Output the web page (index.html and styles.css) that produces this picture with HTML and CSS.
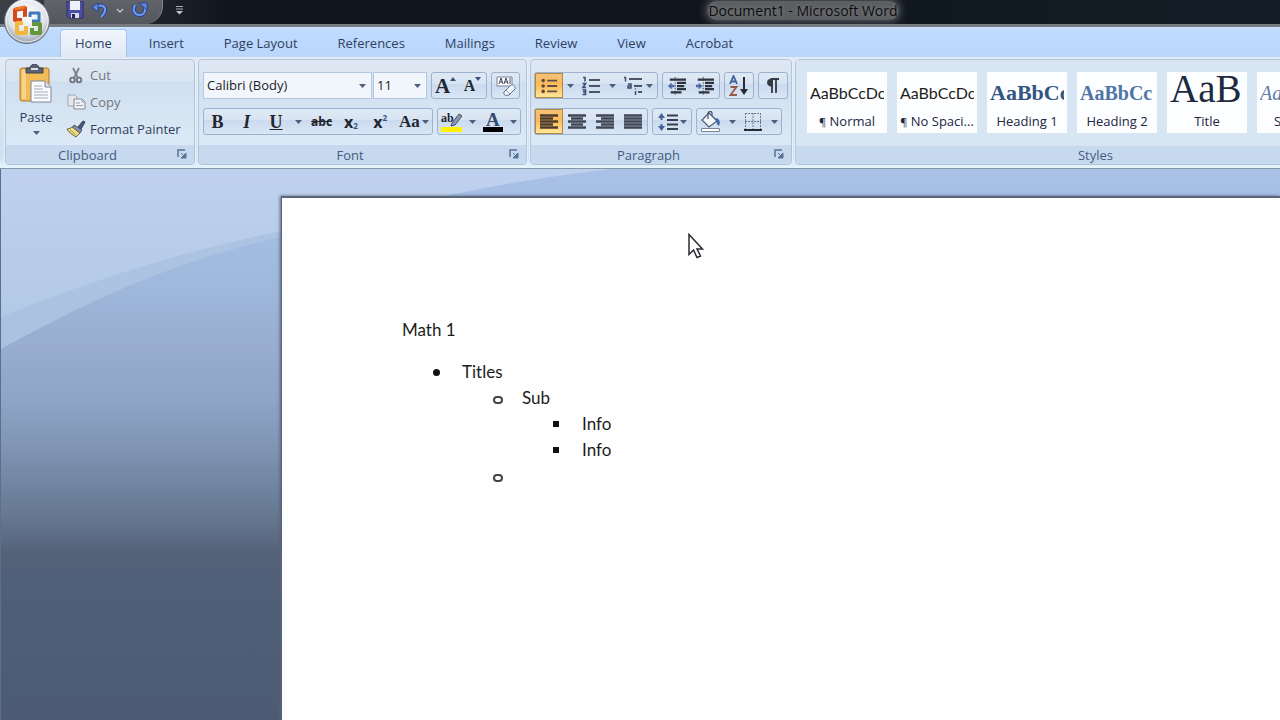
FILE: index.html
```html
<!DOCTYPE html>
<html lang="en">
<head>
<meta charset="utf-8">
<title>Document1 - Microsoft Word</title>
<link rel="stylesheet" href="styles.css">
</head>
<body>
<svg class="defs" width="0" height="0" aria-hidden="true">
  <symbol id="arrow" viewBox="0 0 7 4"><path d="M0 0h7L3.500 4z" fill="#4c5f7e"/></symbol>
  <symbol id="launch" viewBox="0 0 10 10"><path d="M1 8V1h7" fill="none" stroke="#5a7296" stroke-width="1.500"/><path d="M4 4l3 3M9 4v5H4z" stroke="#5a7296" fill="#5a7296"/></symbol>
</svg>

<header class="titlebar">
  <div class="qat">
    <button class="qat-btn" aria-label="Save">
      <svg width="18" height="18" viewBox="0 0 18 18"><path d="M1 0h16v17H3l-2-2z" fill="#4d4fa6" stroke="#2c2d6b"/><path d="M4 0h10v9H4z" fill="#eef1fb"/><path d="M5 12h8v5H5z" fill="#d5d9ea"/><path d="M6 13h3v4H6z" fill="#25264f"/></svg>
    </button>
    <button class="qat-btn" aria-label="Undo">
      <svg width="16" height="16" viewBox="0 0 16 16"><path d="M5 5c4-3 9-1 8 4-.4 2.500-2 4-4 6" fill="none" stroke="#27459c" stroke-width="4"/><path d="M5 5c4-3 9-1 8 4-.4 2.500-2 4-4 6" fill="none" stroke="#6f9be6" stroke-width="2"/><path d="M0 5l6-4v9z" fill="#5f8ce0" stroke="#27459c"/></svg>
    </button>
    <button class="qat-more" aria-label="Undo history">
      <svg width="8" height="5" viewBox="0 0 8 5"><path d="M1 1l3 3 3-3" fill="none" stroke="#b9bcc4" stroke-width="1.500"/></svg>
    </button>
    <button class="qat-btn" aria-label="Repeat">
      <svg width="16" height="16" viewBox="0 0 16 16"><path d="M3 3c-3 6 0 10 5 10 4 0 6-4 5-9" fill="none" stroke="#27459c" stroke-width="4"/><path d="M3 3c-3 6 0 10 5 10 4 0 6-4 5-9" fill="none" stroke="#6f9be6" stroke-width="2"/><path d="M7 1h8v7z" fill="#5f8ce0" stroke="#27459c"/></svg>
    </button>
  </div>
  <button class="qat-custom" aria-label="Customize Quick Access Toolbar">
    <svg width="9" height="9" viewBox="0 0 9 9"><path d="M1 .5h7M1 3h7" stroke="#aab0ba"/><path d="M1 5h7L4.500 8.500z" fill="#c3c8d0"/></svg>
  </button>
  <h1 class="title"><span>Document1 - Microsoft Word</span></h1>
  <button class="orb" aria-label="Office Button">
    <svg width="48" height="48" viewBox="0 0 48 48">
      <defs><radialGradient id="orbFill" cx=".5" cy=".35" r=".65"><stop offset="0" stop-color="#fff"/><stop offset=".65" stop-color="#dfe3ea"/><stop offset="1" stop-color="#949ca9"/></radialGradient></defs>
      <circle cx="24" cy="24" r="22.500" fill="url(#orbFill)" stroke="#626977"/>
      <circle cx="24" cy="24" r="21" fill="none" stroke="#fff" stroke-opacity=".7"/>
      <g fill="none" stroke-linejoin="round">
        <path d="M19 23h-7V13l10-2v9" stroke="#d24a1c" stroke-width="4"/>
        <path d="M12 12l10-2" stroke="#ee7a28" stroke-width="3"/>
        <path d="M27 20v-4h9v8h-7" stroke="#3f78bd" stroke-width="3"/>
        <path d="M20 26h-6v10h9v-7" stroke="#f0b83c" stroke-width="4"/>
        <path d="M29 27h8v9h-8v-5" stroke="#64963c" stroke-width="4"/>
        <path d="M22 20l5 6" stroke="#fff" stroke-width="2"/>
      </g>
    </svg>
  </button>
</header>

<nav class="tabs" aria-label="Ribbon tabs">
  <button class="tab tab-active">Home</button>
  <button class="tab">Insert</button>
  <button class="tab">Page Layout</button>
  <button class="tab">References</button>
  <button class="tab">Mailings</button>
  <button class="tab">Review</button>
  <button class="tab">View</button>
  <button class="tab">Acrobat</button>
</nav>

<section class="ribbon" aria-label="Home">
  <div class="group group-clipboard">
    <div class="group-body clipboard">
      <button class="paste">
        <svg width="36" height="40" viewBox="0 0 36 40"><rect x="2" y="4" width="29" height="33" rx="2" fill="#f3bb56" stroke="#a97a35"/><path d="M4 6h4v29H4z" fill="#f9d38a"/><path d="M8 4h4c0-5 9-5 9 0h4v5H8z" fill="#5a6172" stroke="#3d4453"/><path d="M13 4h7v2h-7z" fill="#d9dde6"/><path d="M13 17h14l6 6v15H13z" fill="#fafbff" stroke="#8088a0"/><path d="M27 17v6h6" fill="#dfe3ee" stroke="#8088a0"/><path d="M16 22h8M16 25h9M16 28h14M16 31h14M16 34h14" stroke="#a3a9ba"/></svg>
        <span>Paste</span>
        <svg width="7" height="4"><use href="#arrow"/></svg>
      </button>
      <div class="clip-list">
        <button class="clip-btn clip-off">
          <svg width="20" height="18" viewBox="0 0 20 18"><path d="M7 2l5 10M13 2L8 12" stroke="#7b818c" stroke-width="1.800"/><circle cx="6.500" cy="14" r="2.300" fill="none" stroke="#6f7580" stroke-width="1.800"/><circle cx="13" cy="14" r="2.300" fill="none" stroke="#6f7580" stroke-width="1.800"/></svg>
          Cut
        </button>
        <button class="clip-btn clip-off">
          <svg width="20" height="18" viewBox="0 0 20 18"><path d="M2 2h7l2 2v9H2z" fill="#e4e7ec" stroke="#a1a7b2"/><path d="M8 6h8l3 3v7H8z" fill="#eff1f5" stroke="#858c99"/><path d="M16 6v3h3M10 10h4M10 12.500h7" fill="none" stroke="#9aa1ad"/></svg>
          Copy
        </button>
        <button class="clip-btn">
          <svg width="20" height="18" viewBox="0 0 20 18"><path d="M12 7l5-6 2 1-4 7z" fill="#4d5a78" stroke="#2f3a55"/><path d="M8 5l8 5-2 3-8-5z" fill="#8792ac" stroke="#4a5571"/><path d="M6 7l8 6-4 4C7 15 3 13 1 9c2 0 4-1 5-2z" fill="#eddc8a" stroke="#6a6338"/><path d="M4 10l6 5" stroke="#a39748"/></svg>
          Format Painter
        </button>
      </div>
    </div>
    <div class="group-label"><span>Clipboard</span><button class="launcher" aria-label="Clipboard options"><svg width="10" height="10"><use href="#launch"/></svg></button></div>
  </div>

  <div class="group group-font">
    <div class="group-body rows">
      <div class="row">
        <div class="combos">
          <div class="combo combo-font"><select aria-label="Font"><option>Calibri (Body)</option></select><svg width="7" height="4"><use href="#arrow"/></svg></div>
          <div class="combo combo-size"><select aria-label="Font Size"><option>11</option></select><svg width="7" height="4"><use href="#arrow"/></svg></div>
        </div>
        <div class="set">
          <button class="tool glyph glyph-grow" aria-label="Grow Font">A<svg width="6" height="4" viewBox="0 0 6 4"><path d="M0 4h6L3 0z" fill="#39517d"/></svg></button>
          <button class="tool glyph glyph-shrink" aria-label="Shrink Font">A<svg width="6" height="4" viewBox="0 0 6 4"><path d="M0 0h6L3 4z" fill="#39517d"/></svg></button>
        </div>
        <div class="set">
          <button class="tool" aria-label="Clear Formatting"><svg width="22" height="22" viewBox="0 0 22 22"><path d="M2 2h15v9H2z" fill="#fff" stroke="#76829a"/><path d="M4 9l2-6 2 6M5 7h3M9 9l2-6 2 6M10 7h3M15 3v6" fill="none" stroke="#3e4961"/><path d="M9 17l7-7c2-1 5 2 4 4l-6 6c-3 1-6 0-5-3z" fill="#f4f5fa" stroke="#626e87"/><path d="M11 15l4 4" stroke="#8d97ab"/></svg></button>
        </div>
      </div>
      <div class="row">
        <div class="set set-style">
          <button class="tool glyph" aria-label="Bold">B</button>
          <button class="tool glyph glyph-i" aria-label="Italic">I</button>
          <button class="tool glyph glyph-u" aria-label="Underline">U</button>
          <button class="drop" aria-label="Underline styles"><svg width="7" height="4"><use href="#arrow"/></svg></button>
          <button class="tool glyph glyph-s" aria-label="Strikethrough">abc</button>
          <button class="tool glyph glyph-x" aria-label="Subscript">x<sub>2</sub></button>
          <button class="tool glyph glyph-x" aria-label="Superscript">x<sup>2</sup></button>
          <button class="tool glyph glyph-case" aria-label="Change Case">Aa<svg width="7" height="4"><use href="#arrow"/></svg></button>
        </div>
        <div class="set">
          <button class="tool" aria-label="Highlight"><svg width="24" height="22" viewBox="0 0 24 22"><text x="1" y="11" class="svg-ab">ab</text><path d="M12 12l7-9 3 2-7 9-4 1z" fill="#8c98b0" stroke="#444f68"/><path d="M1 16h21v5H1z" fill="#fff200"/></svg></button>
          <button class="drop" aria-label="Highlight colors"><svg width="7" height="4"><use href="#arrow"/></svg></button>
          <button class="tool" aria-label="Font Color"><svg width="22" height="22" viewBox="0 0 22 22"><text x="4" y="15" class="svg-a">A</text><path d="M1 16h20v5H1z" fill="#000"/></svg></button>
          <button class="drop" aria-label="Font colors"><svg width="7" height="4"><use href="#arrow"/></svg></button>
        </div>
      </div>
    </div>
    <div class="group-label"><span>Font</span><button class="launcher" aria-label="Font options"><svg width="10" height="10"><use href="#launch"/></svg></button></div>
  </div>

  <div class="group group-para">
    <div class="group-body rows">
      <div class="row">
        <div class="set">
          <button class="tool tool-on" aria-label="Bullets"><svg width="18" height="18" viewBox="0 0 20 20"><g fill="#5f4a3c"><circle cx="3.500" cy="4" r="2"/><circle cx="3.500" cy="10" r="2"/><circle cx="3.500" cy="16" r="2"/></g><path d="M8 4h11M8 10h11M8 16h11" stroke="#5c5048" stroke-width="2"/></svg></button>
          <button class="drop" aria-label="Bullet styles"><svg width="7" height="4"><use href="#arrow"/></svg></button>
          <button class="tool" aria-label="Numbering"><svg width="20" height="20" viewBox="0 0 20 20"><path d="M2 1.500h2v4M1.500 7.500h3L2 11.500h3M1.500 14h3v4.500h-3M2 16h2.500" fill="none" stroke="#3e4d6c" stroke-width="1.600"/><path d="M8 4h11M8 10h11M8 16h11" stroke="#4d5565" stroke-width="2"/></svg></button>
          <button class="drop" aria-label="Number styles"><svg width="7" height="4"><use href="#arrow"/></svg></button>
          <button class="tool tool-list" aria-label="Multilevel List"><svg width="21" height="20" viewBox="0 0 21 20"><path d="M1 1.500h1.500v4M5 8h3v4H5v-2h3M12.500 15v4M12.500 12.500v1" fill="none" stroke="#3e4d6c" stroke-width="1.500"/><path d="M6 3h13M11 10h8M15 16h4" stroke="#4d5565" stroke-width="2"/></svg><svg width="7" height="4"><use href="#arrow"/></svg></button>
        </div>
        <div class="set">
          <button class="tool" aria-label="Decrease Indent"><svg width="20" height="18" viewBox="0 0 20 20"><path d="M2 3h18M10 6.500h10M10 10h8M10 13.500h10M3 17h12" stroke="#30343e" stroke-width="2.500"/><path d="M8 0v20" stroke="#30343e" stroke-dasharray="1.500 1.500"/><path d="M0 10l4-4v2.500h3v3H4V14z" fill="#4a6aa8"/></svg></button>
          <button class="tool" aria-label="Increase Indent"><svg width="20" height="18" viewBox="0 0 20 20"><path d="M2 3h18M10 6.500h10M10 10h8M10 13.500h10M3 17h12" stroke="#30343e" stroke-width="2.500"/><path d="M8 0v20" stroke="#30343e" stroke-dasharray="1.500 1.500"/><path d="M7 10L3 6v2.500H0v3h3V14z" fill="#4a6aa8"/></svg></button>
        </div>
        <div class="set">
          <button class="tool" aria-label="Sort"><svg width="20" height="22" viewBox="0 0 20 22"><path d="M1 9l3.500-8L8 9M2 6.500h5" fill="none" stroke="#3f62a0" stroke-width="1.800"/><path d="M1.500 12h6l-6 8h6.500" fill="none" stroke="#9a5a48" stroke-width="1.800"/><path d="M15 2v16" stroke="#252a35" stroke-width="2"/><path d="M11 14h8l-4 6z" fill="#252a35"/></svg></button>
        </div>
        <div class="set">
          <button class="tool" aria-label="Show paragraph marks"><svg width="16" height="18" viewBox="0 0 16 18"><path d="M7 2v14M11 2v14M6 2h8" stroke="#333945" stroke-width="1.800"/><path d="M8 1v9C0 10 0 1 8 1z" fill="#333945"/></svg></button>
        </div>
      </div>
      <div class="row">
        <div class="set">
          <button class="tool tool-on" aria-label="Align Left"><svg width="18" height="16" viewBox="0 0 18 16"><path d="M0 1.500h18M0 4.500h13M0 7.500h18M0 10.500h13M0 13.500h18" stroke="#4a3d30" stroke-width="2.400"/></svg></button>
          <button class="tool" aria-label="Center"><svg width="18" height="16" viewBox="0 0 18 16"><path d="M0 1.500h18M3 4.500h12M0 7.500h18M3 10.500h12M0 13.500h18" stroke="#404653" stroke-width="2.400"/></svg></button>
          <button class="tool" aria-label="Align Right"><svg width="18" height="16" viewBox="0 0 18 16"><path d="M0 1.500h18M5 4.500h13M0 7.500h18M5 10.500h13M0 13.500h18" stroke="#404653" stroke-width="2.400"/></svg></button>
          <button class="tool" aria-label="Justify"><svg width="18" height="16" viewBox="0 0 18 16"><path d="M0 1.500h18M0 4.500h18M0 7.500h18M0 10.500h18M0 13.500h18" stroke="#404653" stroke-width="2.400"/></svg></button>
        </div>
        <div class="set">
          <button class="tool tool-list" aria-label="Line Spacing"><svg width="20" height="20" viewBox="0 0 20 20"><path d="M0 6l3.500-5L7 6zM0 14l3.500 5L7 14z" fill="#41619c"/><path d="M3.500 4v4M3.500 12v4" stroke="#41619c" stroke-width="2"/><path d="M9 3.500h11M9 8h11M9 12.500h11M9 17h11" stroke="#373e4d" stroke-width="2"/></svg><svg width="7" height="4"><use href="#arrow"/></svg></button>
        </div>
        <div class="set">
          <button class="tool" aria-label="Shading"><svg width="22" height="22" viewBox="0 0 22 22"><path d="M9 2l8 8-8 6-7-7z" fill="#f4f6fb" stroke="#505c76" stroke-width="1.300"/><path d="M8 8V2c1-2 4-2 4 0v3" fill="none" stroke="#505c76" stroke-width="1.300"/><path d="M15 7c4 0 6 3 4 8-2-1-2-3-3-5z" fill="#4066a8"/><path d="M1.500 17.500h18v3h-18z" fill="#fff" stroke="#7b8599"/></svg></button>
          <button class="drop" aria-label="Shading colors"><svg width="7" height="4"><use href="#arrow"/></svg></button>
          <button class="tool" aria-label="Borders"><svg width="18" height="20" viewBox="0 0 18 20"><path d="M1.500 1v16M9 1v16M16.500 1v16M1 1.500h16M1 9.500h16" fill="none" stroke="#6e7a91" stroke-dasharray="2 1"/><path d="M0 18h18" stroke="#252a35" stroke-width="2"/></svg></button>
          <button class="drop" aria-label="Border styles"><svg width="7" height="4"><use href="#arrow"/></svg></button>
        </div>
      </div>
    </div>
    <div class="group-label"><span>Paragraph</span><button class="launcher" aria-label="Paragraph options"><svg width="10" height="10"><use href="#launch"/></svg></button></div>
  </div>

  <div class="group group-styles">
    <div class="group-body gallery">
      <button class="card"><span class="sample">AaBbCcDc</span><span class="card-name"><i>¶</i> Normal</span></button>
      <button class="card"><span class="sample">AaBbCcDc</span><span class="card-name"><i>¶</i> No Spaci...</span></button>
      <button class="card"><span class="sample sample-h1">AaBbCc</span><span class="card-name">Heading 1</span></button>
      <button class="card"><span class="sample sample-h2">AaBbCc</span><span class="card-name">Heading 2</span></button>
      <button class="card"><span class="sample sample-title">AaB</span><span class="card-name">Title</span></button>
      <button class="card"><span class="sample sample-sub">AaBbCc.</span><span class="card-name">Subtitle</span></button>
    </div>
    <div class="group-label"><span>Styles</span></div>
  </div>
</section>

<main class="workspace">
  <svg class="backdrop" viewBox="0 0 1280 551" preserveAspectRatio="xMinYMin slice" aria-hidden="true">
    <defs>
      <linearGradient id="sky" x1="0" y1="0" x2="0" y2="180" gradientUnits="userSpaceOnUse"><stop offset="0" stop-color="#bfd1ee"/><stop offset="1" stop-color="#b0c8e4"/></linearGradient>
      <linearGradient id="hill" x1="0" y1="0" x2="0" y2="551" gradientUnits="userSpaceOnUse">
        <stop offset="0" stop-color="#a9c0e7"/><stop offset=".19" stop-color="#a0bade"/><stop offset=".32" stop-color="#98add0"/><stop offset=".42" stop-color="#8ea4c6"/><stop offset=".5" stop-color="#8196b6"/><stop offset=".57" stop-color="#7285a2"/><stop offset=".63" stop-color="#667890"/><stop offset=".7" stop-color="#536179"/><stop offset=".8" stop-color="#4d5f77"/><stop offset="1" stop-color="#4c5b73"/>
      </linearGradient>
    </defs>
    <path d="M0 0h1280v551H0z" fill="url(#sky)"/>
    <path d="M0 148C95 110 180 82 290 60L440 30 640 0h640v551H0z" fill="#a8bfde" fill-opacity=".7"/>
    <path d="M0 180C100 125 185 88 290 66L440 28Q510 12 610 0h670v551H0z" fill="url(#hill)"/>
  </svg>
  <article class="page">
    <p>Math 1</p>
    <ul class="list list-dot">
      <li>Titles
        <ul class="list list-ring">
          <li>Sub
            <ul class="list list-square">
              <li>Info</li>
              <li>Info</li>
            </ul>
          </li>
          <li>&nbsp;</li>
        </ul>
      </li>
    </ul>
    <svg class="pointer" width="16" height="26" viewBox="0 0 16 26" aria-hidden="true"><path d="M1 1.500v20l4.500-4.500 3.500 7.500 3.500-1.500-3.500-7h5.500z" fill="#fff" stroke="#2b2b33" stroke-width="1.500"/></svg>
  </article>
</main>
</body>
</html>
```
FILE: styles.css
```css
*, *::before { box-sizing: border-box; }

body {
  margin: 0;
  min-height: 100vh;
  display: flex;
  flex-direction: column;
  overflow-x: hidden;
  background: #4c5b73;
  color: #2f3f60;
  font: 13px/18px "Open Sans", "Noto Sans", sans-serif;
}

button, select {
  margin: 0;
  padding: 0;
  border: 0;
  background: none;
  color: inherit;
  font: inherit;
}

svg { display: block; flex: none; }
.defs { position: absolute; }

/* Title bar */
.titlebar {
  position: relative;
  display: flex;
  align-items: flex-start;
  height: 27px;
  padding-left: 44px;
  border-bottom: 3px solid #777b80;
  background: linear-gradient(90deg, #3b3f47 0, #10161e 18%, #0e151d 60%, #151e28 100%);
}

.qat {
  display: flex;
  align-items: center;
  gap: 8px;
  height: 24px;
  padding: 0 14px 4px 22px;
  border-right: 1px solid #85888d;
  border-radius: 0 0 18px 0;
  background: linear-gradient(#60636a, #54575e);
}

.qat-btn, .qat-more { display: flex; }
.qat-custom { padding: 6px 12px; }

.title {
  flex: 1;
  height: 24px;
  margin: 0;
  padding: 0 58px 0 188px;
  overflow: hidden;
  text-align: center;
  color: #0b0d10;
  font-size: 14px;
  font-weight: 400;
  line-height: 22px;
}

.title span {
  border-radius: 8px;
  background: #5c5e61;
  box-shadow: 0 0 8px 2px #5c5e61;
  text-shadow: 0 0 4px #888;
}

.orb {
  position: absolute;
  left: 3px;
  top: -3px;
}

/* Tabs */
.tabs {
  display: flex;
  gap: 4px;
  height: 30px;
  padding: 2px 0 0 60px;
  background: linear-gradient(#cfe2fb 0, #bfdbff 3px, #b9d6fb);
}

.tab {
  padding: 0 17px 2px;
  border: 1px solid transparent;
  border-bottom: 0;
  white-space: nowrap;
}

.tab-active {
  padding: 0 14px 2px;
  border-color: #a5c3e6;
  border-radius: 4px 4px 0 0;
  background: linear-gradient(#f0f6fd, #dfe8f4);
}

/* Ribbon */
.ribbon {
  display: flex;
  gap: 3px;
  height: 112px;
  padding: 2px 0 3px 5px;
  overflow: hidden;
  border-bottom: 1px solid #8299a8;
  background: linear-gradient(#e2e9f3, #cfe0f3 90%, #e4f5fb);
}

.group {
  flex: none;
  display: flex;
  flex-direction: column;
  border: 1px solid #b0c4da;
  border-radius: 4px;
  background: linear-gradient(#dfe8f3 0, #d8e4f1 20%, #d0dfef 21%, #dce9f6 80%);
  box-shadow: 0 0 0 1px #e6f0f9;
}

.group-clipboard { width: 190px; }
.group-font { width: 329px; }
.group-para { width: 262px; }
.group-styles { width: 608px; }
.group-body { flex: 1; }

.group-label {
  display: flex;
  align-items: center;
  height: 19px;
  padding-right: 7px;
  border-radius: 0 0 3px 3px;
  background: #c6d9ef;
  color: #455b80;
}

.group-label span { flex: 1; padding-right: 8px; text-align: center; }
.group-styles .group-label span { padding-right: 0; }
.launcher { padding: 0 0 2px; }

/* Clipboard */
.clipboard { display: flex; padding: 4px 0 0 10px; }

.paste {
  display: flex;
  flex-direction: column;
  align-items: center;
  width: 40px;
}

.paste span { margin: 3px 0 4px; line-height: 20px; }
.clip-list { display: flex; flex-direction: column; margin: -3px 0 0 10px; }

.clip-btn {
  display: flex;
  align-items: center;
  gap: 4px;
  height: 27px;
  white-space: nowrap;
}

.clip-off { color: #74767c; }

/* Tool rows */
.rows {
  display: flex;
  flex-direction: column;
  gap: 9px;
  padding: 12px 4px 0;
}

.group-para .rows { padding: 12px 0 0 3px; }
.row { display: flex; gap: 4px; }
.combos { display: flex; gap: 1px; }

.combo {
  position: relative;
  display: flex;
  align-items: center;
  height: 27px;
  border: 1px solid #b4c8e2;
  background: #f1f6fc;
  color: #1c1c22;
}

.combo select { width: 100%; height: 25px; padding: 0 0 2px 3px; appearance: none; }
.combo svg { position: absolute; right: 5px; pointer-events: none; }
.combo-font { width: 169px; }
.combo-size { width: 54px; }

.set {
  display: flex;
  height: 27px;
  border: 1px solid #9db2ce;
  border-radius: 3px;
  background: linear-gradient(#dfe9f5 0, #d8e4f2 45%, #cbdaee 46%, #d8e6f5);
}

.set-style { width: 230px; justify-content: space-between; }

.tool {
  display: flex;
  align-items: center;
  justify-content: center;
  width: 27px;
  height: 25px;
}

.drop {
  display: flex;
  align-items: center;
  justify-content: center;
  width: 14px;
}

.group-para .tool { width: 28px; }
.group-para .tool-list { width: 38px; gap: 2px; }

.tool-on {
  border: 1px solid #b5873f;
  background: linear-gradient(#f4c27a 0, #fbb95a 40%, #fdc15e 55%, #ffe79a);
}

.glyph {
  color: #22262e;
  font-family: "Liberation Serif", serif;
  font-weight: 700;
  font-size: 18px;
}

.glyph-grow { font-size: 21px; }
.glyph-shrink { font-size: 16px; }
.glyph-grow svg, .glyph-shrink svg { align-self: flex-start; margin-top: 4px; }
.glyph-i { font-style: italic; }
.glyph-u { text-decoration: underline; }
.glyph-s { font-family: "Open Sans", sans-serif; font-size: 12px; text-decoration: line-through; }
.glyph-x { font-family: "Open Sans", sans-serif; font-size: 16px; }
.glyph-x sub, .glyph-x sup { font-size: 8px; line-height: 8px; color: #39517d; }
.glyph-x sub { align-self: flex-end; margin-bottom: 4px; }
.glyph-x sup { align-self: flex-start; margin-top: 5px; }
.glyph-case { width: 36px; gap: 2px; font-size: 17px; }
.svg-ab { font: 700 12px "Liberation Serif", serif; fill: #22262e; }
.svg-a { font: 700 19px "Liberation Serif", serif; fill: #34496f; }

/* Styles gallery */
.gallery {
  display: flex;
  gap: 10px;
  padding: 12px 11px 13px;
  background: #d8e6f4;
}

.card {
  display: flex;
  flex-direction: column;
  justify-content: flex-end;
  width: 80px;
  height: 61px;
  padding: 0 3px 2px;
  overflow: hidden;
  background: #fdfeff;
  color: #23243f;
}

.sample {
  height: 39px;
  overflow: hidden;
  color: #1d1d1d;
  font: 16px/42px Lato, sans-serif;
  text-align: left;
  white-space: nowrap;
}

.sample-h1 { color: #34557f; font: 700 22px/42px "Liberation Serif", serif; }
.sample-h2 { color: #4f75a3; font: 700 20px/42px "Liberation Serif", serif; }
.sample-title { color: #1c2a40; font: 39px/34px "Liberation Serif", serif; }
.sample-sub { color: #5d7da5; font: italic 20px/42px "Liberation Serif", serif; }
.card-name { line-height: 20px; text-align: center; white-space: nowrap; }
.card-name i { font-style: normal; font-size: 11px; line-height: 18px; }

/* Document */
.workspace {
  position: relative;
  flex: 1;
  display: flex;
  padding: 27px 0 0 280px;
  overflow: hidden;
  border-left: 1px solid #5c7089;
}

.backdrop { position: absolute; inset: 0; width: 100%; height: 100%; }

.page {
  position: relative;
  flex: 1;
  padding: 119px 120px 60px;
  border: solid #5d6678;
  border-width: 2px 0 0 1px;
  background: #fefefe;
  box-shadow: -1px 0 3px #56637a;
  color: #1c1c1c;
  font: 17px/26px Lato, sans-serif;
}

.page p { margin: 0 0 16px; }

.list { margin: 0; padding: 0 0 0 60px; list-style: none; }
.list > li { position: relative; }

.list > li::before {
  content: "";
  position: absolute;
  left: -29px;
  top: 10px;
  width: 7px;
  height: 7px;
  background: #111;
}

.list-dot > li::before { border-radius: 50%; }
.list-ring > li::before { top: 11px; width: 10px; height: 8px; border: 2px solid #444; border-radius: 4px; background: none; }
.list-square > li::before { width: 6px; height: 6px; }

.pointer { position: absolute; left: 406px; top: 35px; }
```
